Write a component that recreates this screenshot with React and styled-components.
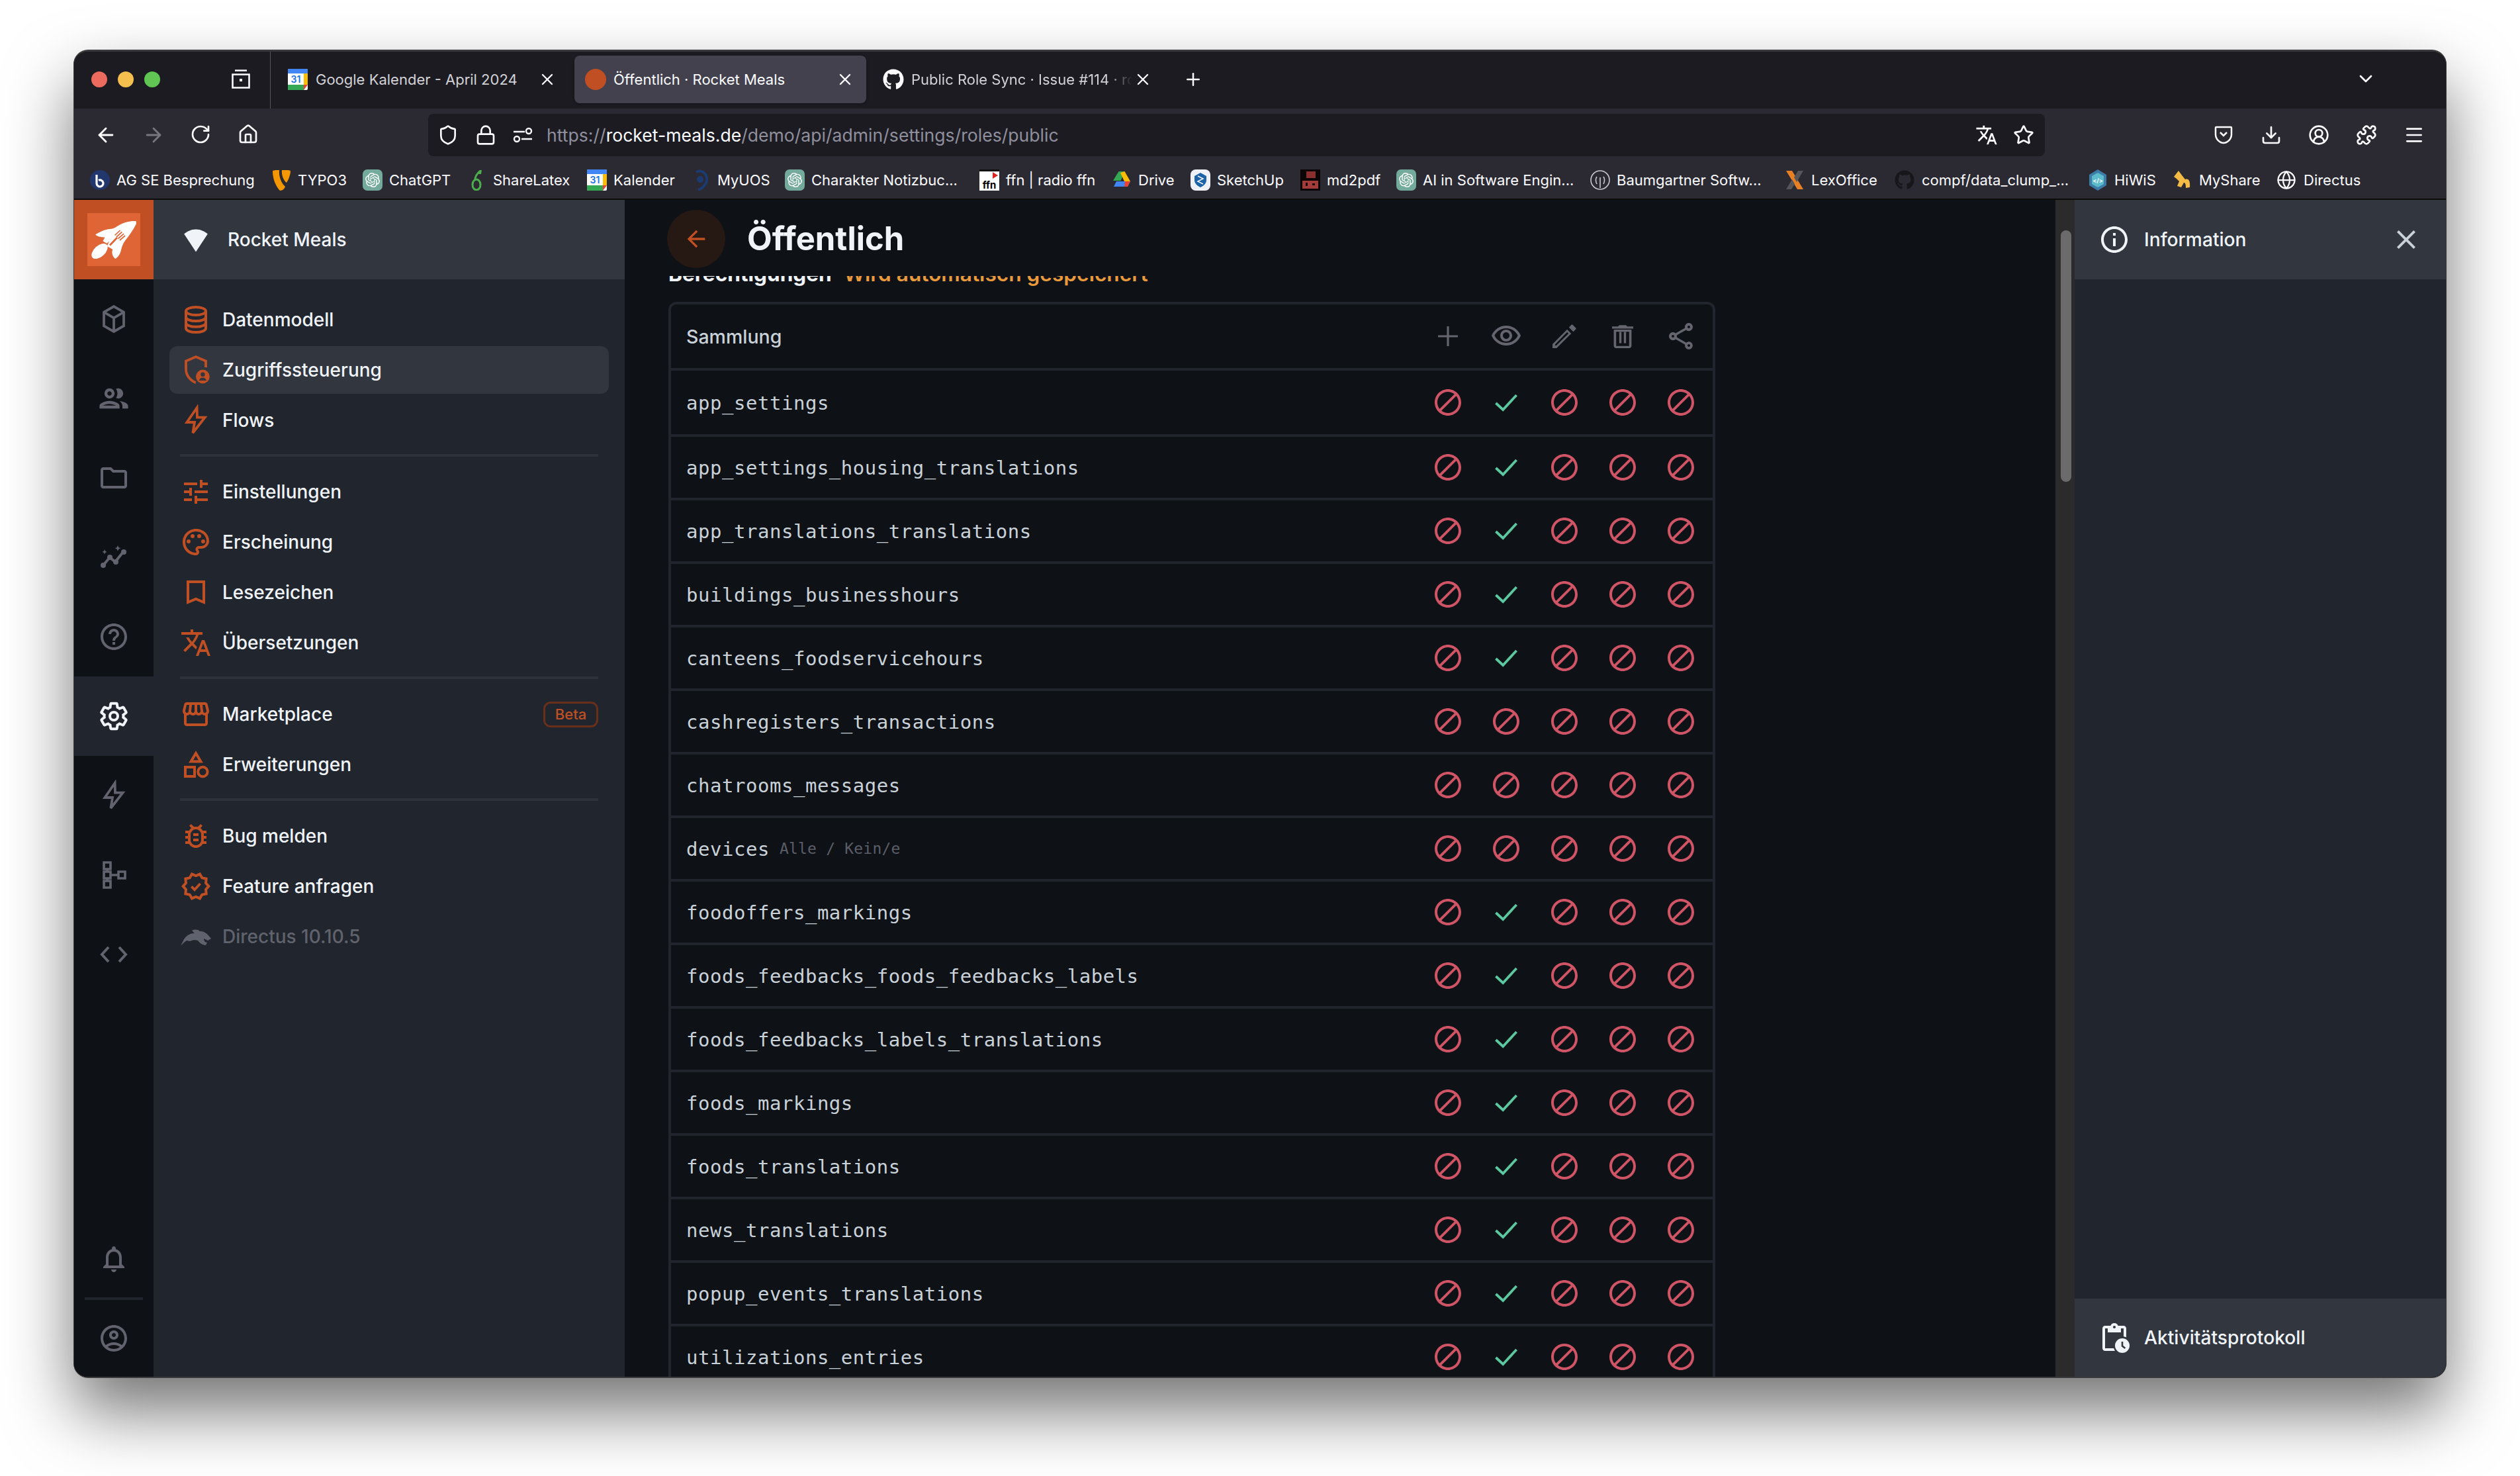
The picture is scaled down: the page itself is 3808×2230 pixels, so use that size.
import React from 'react';
import styled, { createGlobalStyle } from 'styled-components';
import { ArrowLeft, ArrowRight, RotateCw, Home, Shield, Lock, Star, Download, CircleUserRound, Puzzle, Menu, ChevronDown, Plus, X, Globe } from 'lucide-react';
import { FaGithub } from 'react-icons/fa';
import { SiOpenai } from 'react-icons/si';

const ORANGE = '#c05024';
const MODULE = '#62636e';

const Global = createGlobalStyle`
  html, body { margin: 0; padding: 0; background: #fff; }
  * { box-sizing: border-box; }
  body { font-family: Inter, "Liberation Sans", sans-serif; }
`;

const Page = styled.div`
  width: 3808px; height: 2230px; padding: 75px 111px 148px; overflow: hidden; background: #fff;
`;
const Win = styled.div`
  height: 2007px; display: flex; flex-direction: column; border-radius: 22px; overflow: hidden;
  border: solid #3a3a3c; border-width: 3px 1px 2px;
  box-shadow: 0 50px 100px rgba(0,0,0,.55);
  background: #1c1b22;
`;

/* Browser chrome */
const TitleBar = styled.div`height: 86px; flex: none; display: flex; align-items: center; background: #1c1b22; color: #fbfbfe;`;
const Lights = styled.div`display: flex; gap: 16px; margin-left: 26px; margin-bottom: 2px;`;
const Light = styled.span`width: 24px; height: 24px; border-radius: 50%; background: ${p => p.$c};`;
const TabsBtn = styled.div`margin-left: 106px; margin-bottom: 2px; width: 32px; height: 32px; display: flex;`;
const TabSep = styled.div`width: 1px; height: 86px; margin-left: 28px; background: #55545c;`;
const Tabs = styled.div`display: flex; gap: 9px; margin-left: 9px; margin-bottom: 2px; align-items: center;`;
const Tab = styled.div`
  width: 441px; height: 72px; border-radius: 8px; display: flex; align-items: center; padding: 0 16px;
  background: ${p => p.$active ? '#42414d' : 'transparent'};
  box-shadow: ${p => p.$active ? '0 1px 4px rgba(0,0,0,.4)' : 'none'};
`;
const TabIcon = styled.div`width: 32px; height: 32px; flex: none; display: flex; align-items: center; justify-content: center;`;
const TabDot = styled.span`width: 32px; height: 32px; border-radius: 50%; background: ${ORANGE};`;
const TabLabel = styled.div`
  margin-left: 11px; flex: 1; min-width: 0; white-space: nowrap; overflow: hidden; font-size: 22px; font-weight: 400;
  color: ${p => p.$active ? '#fbfbfe' : '#d2d2d6'};
  -webkit-mask-image: ${p => p.$fade ? 'linear-gradient(90deg,#000 88%,transparent 100%)' : 'none'};
`;
const TabClose = styled.div`width: 32px; height: 24px; display: flex; align-items: center; justify-content: center; flex: none; color: #fbfbfe;`;
const NewTab = styled.div`margin-left: 28px; margin-bottom: 2px; width: 32px; display: flex; justify-content: center;`;
const ListTabs = styled.div`margin-left: auto; margin-right: 105px; margin-bottom: 4px; width: 32px; display: flex; justify-content: center;`;

const ToolBar = styled.div`height: 72px; flex: none; padding: 8px 32px 0 28px; display: flex; align-items: center; background: #2b2a33; color: #fbfbfe;`;
const NavBtns = styled.div`display: flex; gap: 31.5px; width: 507px; flex: none;`;
const NavBtn = styled.div`width: 40px; display: flex; justify-content: center; color: ${p => p.$dim ? '#77767e' : '#fbfbfe'};`;
const UrlBar = styled.div`width: 2443px; height: 64px; flex: none; border-radius: 8px; background: #1c1b22; padding: 0 16px 0 14px; display: flex; align-items: center;`;
const UrlIcon = styled.div`width: 32px; height: 32px; display: flex; justify-content: center; align-items: center; margin-right: ${p => p.$mr || 0}px; flex: none;`;
const UrlText = styled.div`flex: 1; font-size: 26.6px; color: #8f8f9d; white-space: nowrap; margin-left: -4px; b { font-weight: 400; color: #fbfbfe; }`;
const Tools = styled.div`display: flex; gap: 40px; margin-left: auto;`;

const Bookmarks = styled.div`height: 64px; flex: none; padding: 8px 0 0 24px; display: flex; align-items: center; background: #2b2a33;`;
const Bookmark = styled.div`flex: none; width: ${p => p.$w}px; display: flex; align-items: center; gap: 10px; font-size: 22px; color: #fbfbfe; white-space: nowrap;`;
const Fav = styled.svg`width: 30px; height: 32px; flex: none; display: block;`;
const BlackLine = styled.div`height: 2px; flex: none; background: #0b0b0c;`;

/* App */
const AppRow = styled.div`flex: 1; min-height: 0; display: flex; background: #0e1116; font-family: Inter, sans-serif;`;
const ModuleBar = styled.div`width: 120px; flex: none; background: #0e1116; display: flex; flex-direction: column;`;
const LogoBox = styled.div`height: 120px; background: ${ORANGE}; display: flex; align-items: center; justify-content: center;`;
const LogoInner = styled.div`width: 80px; height: 80px; background: #e06536;`;
const ModBtn = styled.div`
  height: ${p => p.$h || 120}px; flex: none; display: flex; align-items: center; justify-content: center;
  color: ${p => p.$active ? '#f0f4f9' : MODULE}; background: ${p => p.$active ? '#21262e' : 'transparent'};
`;
const ModSpacer = styled.div`flex: 1;`;
const ModRule = styled.div`height: 4px; margin: 0 16px; background: #21262e; flex: none;`;

const Nav = styled.div`width: 712px; flex: none; background: #21262e; display: flex; flex-direction: column; overflow: hidden;`;
const NavHead = styled.div`height: 120px; flex: none; background: #31363f; display: flex; align-items: center; padding-left: 40px; gap: 24px; color: #f0f4f9; font-size: 28px; font-weight: 500;`;
const NavList = styled.div`padding: 25px 24px 0; display: flex; flex-direction: column; gap: 4px;`;
const NavItem = styled.div`
  height: 72px; flex: none; display: flex; align-items: center; gap: 16px; padding: 0 16px; border-radius: 12px;
  font-size: 28px; font-weight: 500;
  color: ${p => p.$muted ? '#60636d' : '#f0f4f9'}; background: ${p => p.$active ? '#31363f' : 'transparent'};
`;
const NavIcon = styled.div`width: 48px; height: 48px; flex: none; display: flex; align-items: center; justify-content: center; color: ${p => p.$muted ? '#60636d' : ORANGE};`;
const NavRule = styled.div`height: 4px; flex: none; margin: 11px 16px 13px; background: #2d323b;`;
const Beta = styled.span`
  margin-left: auto; height: 39px; width: 83px; border: 3px solid #6a2f1b; border-radius: 11px;
  display: flex; align-items: center; justify-content: center; font-size: 22px; font-weight: 500; color: ${ORANGE};
`;

const Main = styled.div`width: 2162px; flex: none; overflow: hidden; display: flex; flex-direction: column;`;
const Head = styled.div`height: 115px; flex: none; padding: 15px 0 0 64px; display: flex; gap: 33px; align-items: flex-start;`;
const BackBtn = styled.div`width: 88px; height: 88px; border-radius: 50%; background: #261813; color: ${ORANGE}; display: flex; align-items: center; justify-content: center;`;
const Title = styled.h1`margin: 0; height: 88px; line-height: 88px; font-size: 49px; font-weight: 700; color: #f0f4f9;`;
const Scrolled = styled.div`padding-left: 66px; flex: 1; min-height: 0;`;
const ClipLabel = styled.div`height: 15px; overflow: hidden; position: relative; display: flex; align-items: flex-end;`;
const LabelLine = styled.div`flex: none; line-height: 36px; height: 36px; font-size: 31.6px; font-weight: 700; color: #f0f4f9; white-space: nowrap; em { font-style: normal; font-weight: 600; color: #e99a3d; margin-left: 18px; }`;
const Table = styled.div`width: 1582px; margin-top: 24px; border: 4px solid #21262e; border-bottom: 0; border-radius: 12px 12px 0 0;`;
const Row = styled.div`
  height: ${p => p.$h}px; display: flex; align-items: center; padding: 0 24px 0 23px; border-bottom: 4px solid #21262e;
`;
const RowHeadText = styled.div`font-size: 28.5px; font-weight: 500; color: #c9d1d9;`;
const RowName = styled.div`font-family: "DejaVu Sans Mono", monospace; font-size: 29px; letter-spacing: .53px; color: #c9d1d9; white-space: nowrap; padding-top: 2px;`;
const RowNote = styled.span`font-family: "DejaVu Sans Mono", monospace; font-size: 23px; letter-spacing: .2px; color: #5b5e68; margin-left: 15px; white-space: nowrap;`;
const Cells = styled.div`margin-left: auto; display: flex; gap: 40px; color: ${p => p.$c || 'inherit'};`;
const Mi = styled.svg`width: ${p => p.$s || 48}px; height: ${p => p.$s || 48}px; flex: none; display: block; fill: currentColor; color: ${p => p.$c || 'inherit'};`;

const Track = styled.div`width: 29px; flex: none; background: #2b2b2b; padding: 46px 5px 0 8px;`;
const Thumb = styled.div`height: 380px; border-radius: 8px; background: #6b6b6b;`;

const Side = styled.div`flex: 1; min-width: 0; background: #21262e; display: flex; flex-direction: column;`;
const SideBar = styled.div`
  height: ${p => p.$h}px; flex: none; background: #31363f; display: flex; align-items: center; padding: 0 36px; gap: 21px;
  color: #f0f4f9; font-size: 28.2px; font-weight: 500;
`;
const SideFill = styled.div`flex: 1;`;
const SideClose = styled.div`margin-left: auto; color: #c9d1d9; display: flex;`;

const P = ({ d, c, s, rule }) => <Mi viewBox="0 0 24 24" $c={c} $s={s}><path d={d} fillRule={rule} /></Mi>;
const Stroke = ({ children, w = 2, s }) => (
  <Mi viewBox="0 0 24 24" $s={s} style={{ fill: 'none', stroke: 'currentColor', strokeWidth: w }}>{children}</Mi>
);

const ICON = {
  block: 'M12 2C6.48 2 2 6.48 2 12s4.48 10 10 10 10-4.48 10-10S17.52 2 12 2zM4 12c0-4.42 3.58-8 8-8 1.85 0 3.55.63 4.9 1.69L5.69 16.9C4.63 15.55 4 13.85 4 12zm8 8c-1.85 0-3.55-.63-4.9-1.69L18.31 7.1C19.37 8.45 20 10.15 20 12c0 4.42-3.58 8-8 8z',
  add: 'M19.5 12.8h-6.7v6.7h-1.6v-6.7H4.5v-1.6h6.7V4.5h1.6v6.7h6.7z',
  eye: 'M12 6c3.79 0 7.17 2.13 8.82 5.5C19.17 14.87 15.79 17 12 17s-7.17-2.13-8.82-5.5C4.83 8.13 8.21 6 12 6m0-2C7 4 2.73 7.11 1 11.5 2.73 15.89 7 19 12 19s9.27-3.11 11-7.5C21.27 7.11 17 4 12 4zm0 5c1.38 0 2.5 1.12 2.5 2.5S13.38 14 12 14s-2.5-1.12-2.5-2.5S10.62 9 12 9m0-2c-2.48 0-4.5 2.02-4.5 4.5S9.52 16 12 16s4.5-2.02 4.5-4.5S14.48 7 12 7z',
  pen: 'M14.06 8.9l1.05 1.05L5.9 19H5v-.92l9.06-9.18M17.8 3.2c-.2 0-.35.06-.5.2l-1.9 1.9 3.3 3.3 1.9-1.9c.27-.28.27-.72 0-1l-2.3-2.3c-.14-.14-.3-.2-.5-.2zM14.06 6.9L3 17.95V21h3.1L17.15 9.95l-3.1-3.05z',
  trash: 'M5.3 7h13.4v12.2c0 1-.8 1.8-1.8 1.8H7.1c-1 0-1.8-.8-1.8-1.8V7zm1.8 1.6v10.8h9.8V8.6H7.1zM9.4 8.8h1.7v8.4H9.4zm3.5 0h1.7v8.4h-1.7zM4 4.6h4.5l1-1h5l1 1H20v1.7H4z',
  share: 'M18 16.08c-.76 0-1.44.3-1.96.77L8.91 12.7c.05-.23.09-.46.09-.7s-.04-.47-.09-.7l7.05-4.11c.54.5 1.25.81 2.04.81 1.66 0 3-1.34 3-3s-1.34-3-3-3-3 1.34-3 3c0 .24.04.47.09.7L8.04 9.81C7.5 9.31 6.79 9 6 9c-1.66 0-3 1.34-3 3s1.34 3 3 3c.79 0 1.5-.31 2.04-.81l7.12 4.16c-.05.21-.08.43-.08.65 0 1.61 1.31 2.92 2.92 2.92s2.92-1.31 2.92-2.92c0-1.61-1.31-2.92-2.92-2.92zM18 4c.55 0 1 .45 1 1s-.45 1-1 1-1-.45-1-1 .45-1 1-1zM6 13c-.55 0-1-.45-1-1s.45-1 1-1 1 .45 1 1-.45 1-1 1zm12 7.02c-.55 0-1-.45-1-1s.45-1 1-1 1 .45 1 1-.45 1-1 1z',
  tune: 'M3 17v2h6v-2H3zM3 5v2h10V5H3zm10 16v-2h8v-2h-8v-2h-2v6h2zM7 9v2H3v2h4v2h2V9H7zm14 4v-2H11v2h10zm-6-4h2V7h4V5h-4V3h-2v6z',
  palette: 'M12 22C6.49 22 2 17.51 2 12S6.49 2 12 2s10 4.04 10 9c0 3.31-2.69 6-6 6h-1.77c-.28 0-.5.22-.5.5 0 .12.05.23.13.33.41.47.64 1.06.64 1.67 0 1.38-1.12 2.5-2.5 2.5zm0-18c-4.41 0-8 3.59-8 8s3.59 8 8 8c.28 0 .5-.22.5-.5 0-.16-.08-.28-.14-.35-.41-.46-.63-1.05-.63-1.65 0-1.38 1.12-2.5 2.5-2.5H16c2.21 0 4-1.79 4-4 0-3.86-3.59-7-8-7zM6.5 10a1.5 1.5 0 1 0 0 3 1.5 1.5 0 0 0 0-3zm3-4a1.5 1.5 0 1 0 0 3 1.5 1.5 0 0 0 0-3zm5 0a1.5 1.5 0 1 0 0 3 1.5 1.5 0 0 0 0-3zm3 4a1.5 1.5 0 1 0 0 3 1.5 1.5 0 0 0 0-3z',
  bookmark: 'M5 3h14v18l-7-3-7 3V3zm2 2v13l5-2.18L17 18V5H7z',
  translate: 'M12.87 15.07l-2.54-2.51.03-.03c1.74-1.94 2.98-4.17 3.71-6.53H17V4h-7V2H8v2H1v1.99h11.17C11.5 7.92 10.44 9.75 9 11.35 8.07 10.32 7.3 9.19 6.69 8h-2c.73 1.63 1.73 3.17 2.98 4.56l-5.09 5.02L4 19l5-5 3.11 3.11.76-2.04zM18.5 10h-2L12 22h2l1.12-3h4.75L21 22h2l-4.5-12zm-2.62 7l1.62-4.33L19.12 17h-3.24z',
  store: 'M21.9 8.89l-1.05-4.37c-.22-.9-1-1.52-1.91-1.52H5.05c-.9 0-1.69.63-1.9 1.52L2.1 8.89c-.24 1.02-.02 2.06.62 2.88.08.11.19.19.28.29V19c0 1.1.9 2 2 2h14c1.1 0 2-.9 2-2v-6.94c.09-.09.2-.18.28-.28.64-.82.87-1.87.62-2.89zm-2.99-3.9l1.05 4.37c.1.42.01.84-.25 1.17-.14.18-.44.47-.94.47-.61 0-1.14-.49-1.21-1.14L16.98 5l1.93-.01zM13 5h1.96l.54 4.52c.05.39-.07.78-.33 1.07-.22.26-.54.41-.95.41-.67 0-1.22-.59-1.22-1.31V5zM8.49 9.52L9.04 5H11v4.69c0 .72-.55 1.31-1.29 1.31-.34 0-.65-.15-.89-.41-.25-.29-.37-.68-.33-1.07zm-4.45-.16L5.05 5h1.97l-.58 4.86c-.08.65-.6 1.14-1.21 1.14-.49 0-.8-.29-.93-.47-.27-.32-.36-.75-.26-1.17zM5 19v-6.03c.08.01.15.03.23.03.87 0 1.66-.36 2.24-.95.6.6 1.4.95 2.31.95.87 0 1.65-.36 2.23-.93.59.57 1.39.93 2.29.93.84 0 1.64-.35 2.24-.95.58.59 1.37.95 2.24.95.08 0 .15-.02.23-.03V19H5z',
  bug: 'M20 8h-2.81c-.45-.78-1.07-1.45-1.82-1.96L17 4.41 15.59 3l-2.17 2.17C12.96 5.06 12.49 5 12 5c-.49 0-.96.06-1.41.17L8.41 3 7 4.41l1.62 1.63C7.88 6.55 7.26 7.22 6.81 8H4v2h2.09c-.05.33-.09.66-.09 1v1H4v2h2v1c0 .34.04.67.09 1H4v2h2.81c1.04 1.79 2.97 3 5.19 3s4.15-1.21 5.19-3H20v-2h-2.09c.05-.33.09-.66.09-1v-1h2v-2h-2v-1c0-.34-.04-.67-.09-1H20V8zm-4 4v3c0 .22-.03.47-.07.7l-.1.65-.37.65c-.72 1.24-2.04 2-3.46 2s-2.74-.77-3.46-2l-.37-.64-.1-.65C8.03 15.48 8 15.23 8 15v-4c0-.23.03-.48.07-.7l.1-.65.37-.65c.3-.52.72-.97 1.21-1.31l.57-.39.74-.18c.31-.08.63-.12.94-.12.32 0 .63.04.95.12l.68.16.61.42c.5.34.91.78 1.21 1.31l.38.65.1.65c.04.22.07.47.07.69v1zm-6 2h4v2h-4zm0-4h4v2h-4z',
  verified: 'M23 12l-2.44-2.78.34-3.68-3.61-.82-1.89-3.18L12 3 8.6 1.54 6.71 4.72l-3.61.81.34 3.68L1 12l2.44 2.78-.34 3.69 3.61.82 1.89 3.18L12 21l3.4 1.46 1.89-3.18 3.61-.82-.34-3.68L23 12zm-4.51 2.11l.26 2.79-2.74.62-1.43 2.41L12 18.82l-2.58 1.11-1.43-2.41-2.74-.62.26-2.8L3.66 12l1.85-2.12-.26-2.78 2.74-.61 1.43-2.41L12 5.18l2.58-1.11 1.43 2.41 2.74.62-.26 2.79L20.34 12l-1.85 2.11z',
  folder: 'M9.17 6l2 2H20v10H4V6h5.17M10 4H4c-1.1 0-2 .9-2 2l-.01 12c0 1.1.9 2 2 2H20c1.1 0 2-.9 2-2V8c0-1.1-.9-2-2-2h-8l-2-2z',
  help: 'M11 18h2v-2h-2v2zm1-16C6.48 2 2 6.48 2 12s4.48 10 10 10 10-4.48 10-10S17.52 2 12 2zm0 18c-4.41 0-8-3.59-8-8s3.59-8 8-8 8 3.59 8 8-3.59 8-8 8zm0-14c-2.21 0-4 1.79-4 4h2c0-1.1.9-2 2-2s2 .9 2 2c0 2-3 1.75-3 5h2c0-2.25 3-2.5 3-5 0-2.21-1.79-4-4-4z',
  info: 'M11 7h2v2h-2zm0 4h2v6h-2zm1-9C6.48 2 2 6.48 2 12s4.48 10 10 10 10-4.48 10-10S17.52 2 12 2zm0 18c-4.41 0-8-3.59-8-8s3.59-8 8-8 8 3.59 8 8-3.59 8-8 8z',
  close: 'M19 6.41L17.59 5 12 10.59 6.41 5 5 6.41 10.59 12 5 17.59 6.41 19 12 13.41 17.59 19 19 17.59 13.41 12z',
  back: 'M20 11H7.83l5.59-5.59L12 4l-8 8 8 8 1.41-1.41L7.83 13H20v-2z',
  bell: 'M12 22c1.1 0 2-.9 2-2h-4c0 1.1.9 2 2 2zm6-6v-5c0-3.07-1.63-5.64-4.5-6.32V4c0-.83-.67-1.5-1.5-1.5s-1.5.67-1.5 1.5v.68C7.64 5.36 6 7.92 6 11v5l-2 2v1h16v-1l-2-2zm-2 1H8v-6c0-2.48 1.51-4.5 4-4.5s4 2.02 4 4.5v6z',
  account: 'M12 2C6.48 2 2 6.48 2 12s4.48 10 10 10 10-4.48 10-10S17.52 2 12 2zM7.35 18.5C8.66 17.56 10.26 17 12 17s3.34.56 4.65 1.5C15.34 19.44 13.74 20 12 20s-3.34-.56-4.65-1.5zm10.79-1.38C16.45 15.8 14.32 15 12 15s-4.45.8-6.14 2.12C4.7 15.73 4 13.95 4 12c0-4.42 3.58-8 8-8s8 3.58 8 8c0 1.95-.7 3.73-1.86 5.12zM12 6c-1.93 0-3.5 1.57-3.5 3.5S10.07 13 12 13s3.5-1.57 3.5-3.5S13.93 6 12 6zm0 5c-.83 0-1.5-.67-1.5-1.5S11.17 8 12 8s1.5.67 1.5 1.5S12.83 11 12 11z',
  group: 'M9 13.75c-2.34 0-7 1.17-7 3.5V19h14v-1.75c0-2.33-4.66-3.5-7-3.5zM4.34 17c.84-.58 2.87-1.25 4.66-1.25s3.82.67 4.66 1.25H4.34zM9 12c1.93 0 3.5-1.57 3.5-3.5S10.93 5 9 5 5.5 6.57 5.5 8.5 7.07 12 9 12zm0-5c.83 0 1.5.67 1.5 1.5S9.83 10 9 10s-1.5-.67-1.5-1.5S8.17 7 9 7zm7.04 6.81c1.16.84 1.96 1.96 1.96 3.44V19h4v-1.75c0-2.02-3.5-3.17-5.96-3.44zM15 12c1.93 0 3.5-1.57 3.5-3.5S16.93 5 15 5c-.54 0-1.04.13-1.5.35.63.89 1 1.98 1 3.15s-.37 2.26-1 3.15c.46.22.96.35 1.5.35z',
  diamond: 'M12 4.2c-3.6 0-7 1.7-8.9 3.6L12 21.2l8.9-13.4C19 5.9 15.6 4.2 12 4.2z',
  gear: 'M19.14 12.94c.04-.3.06-.61.06-.94 0-.32-.02-.64-.07-.94l2.03-1.58c.18-.14.23-.41.12-.61l-1.92-3.32c-.12-.22-.37-.29-.59-.22l-2.39.96c-.5-.38-1.03-.7-1.62-.94l-.36-2.54c-.04-.24-.24-.41-.48-.41h-3.84c-.24 0-.43.17-.47.41l-.36 2.54c-.59.24-1.13.57-1.62.94l-2.39-.96c-.22-.08-.47 0-.59.22L2.74 8.87c-.12.21-.08.47.12.61l2.03 1.58c-.05.3-.09.63-.09.94s.02.64.07.94l-2.03 1.58c-.18.14-.23.41-.12.61l1.92 3.32c.12.22.37.29.59.22l2.39-.96c.5.38 1.03.7 1.62.94l.36 2.54c.05.24.24.41.48.41h3.84c.24 0 .44-.17.47-.41l.36-2.54c.59-.24 1.13-.56 1.62-.94l2.39.96c.22.08.47 0 .59-.22l1.92-3.32c.12-.22.07-.47-.12-.61l-2.01-1.58z',
};

const Block = () => <P d={ICON.block} c="#cf5466" />;
const Check = () => (
  <Mi viewBox="0 0 24 24" style={{ fill: 'none', stroke: '#5bc8a0', strokeWidth: 1.9 }}><path d="M4.2 12.5l5.4 5 10.2-11" /></Mi>
);

const RocketLogo = () => (
  <svg width="80" height="80" viewBox="0 0 80 80">
    <path fill="#fff" d="M73.8 12.2C67 11.2 55 13.5 46.5 19c-3.8 2.5-7 4.6-10 4.7-6.5.2-14.5 2.5-24.2 8.6 1.3 2.7 8 4.2 14.3 4.3l-3.2 5.7 6 3.4 3.6-3.2-3.2 7.6 8.4 4.6c-1.6 4.4-.8 10.3 4.1 14.2 4-2 7.4-7 8.6-12.6.9-5 2.7-9.8 6.1-14.6 6.7-8.6 12.7-16.6 16.8-25.5z" />
    <ellipse cx="18.500" cy="57.500" rx="14.500" ry="8.400" fill="#fff" transform="rotate(-42 18.500 57.500)" />
    <g stroke="#e06536" strokeWidth="1.700" fill="none">
      <path d="M41.500 33.500l8-7.500M44 36l8.400-7.600M46.500 38.500l8.600-7.400M49 41l8-7" />
      <path d="M34 48.500L45 37" strokeWidth="2.800" />
    </g>
  </svg>
);

const Cal = () => (
  <Fav viewBox="0 0 30 32">
    <rect width="30" height="32" rx="2" fill="#fff" />
    <path d="M0 7V2a2 2 0 0 1 2-2h26a2 2 0 0 1 2 2v5z" fill="#4285f4" />
    <path d="M0 24h24v8H2a2 2 0 0 1-2-2z" fill="#34a853" />
    <path d="M24 7h6v17h-6z" fill="#fbbc04" />
    <path d="M24 24h6l-6 8z" fill="#ea4335" />
    <text x="12" y="21" fontSize="14" textAnchor="middle" fill="#1a73e8" fontFamily="Inter" fontWeight="600">31</text>
  </Fav>
);
const Oai = () => (
  <Fav viewBox="0 0 30 32">
    <rect width="30" height="32" rx="7" fill="#74aa9c" />
    <foreignObject x="4" y="5" width="22" height="22"><SiOpenai size={22} color="#fff" /></foreignObject>
  </Fav>
);
const favs = {
  cal: <Cal />, oai: <Oai />,
  bbb: <Fav viewBox="0 0 30 32"><circle cx="15" cy="16" r="15" fill="#23376f" /><path d="M10 8v13a5 5 0 1 0 3-4.600" fill="none" stroke="#fff" strokeWidth="3.200" /></Fav>,
  typo: <Fav viewBox="0 0 30 32"><path d="M2 3c0 11 5 23 11 29 4 0 7-3 8-6C15 21 11 10 12 1 7 1 2 1 2 3zM16 1c-1 8 3 16 7 19 3-4 6-13 6-17 0-2-2-2-13-2z" fill="#f49700" /></Fav>,
  sl: <Fav viewBox="0 0 30 32"><path d="M21 2c-4 2-9 10-8 15" fill="none" stroke="#4cae4c" strokeWidth="3" /><ellipse cx="15" cy="23" rx="6" ry="8" fill="none" stroke="#4cae4c" strokeWidth="3" /><path d="M20 1l3 0-1 6-4 0z" fill="#4cae4c" /></Fav>,
  uos: <Fav viewBox="0 0 30 32"><path d="M8 4c12-6 20 8 14 18-3 5-8 8-11 9" fill="none" stroke="#1c3b72" strokeWidth="4" /><circle cx="14" cy="15" r="5" fill="#1c3b72" /></Fav>,
  ffn: <Fav viewBox="0 0 30 32"><rect width="30" height="32" fill="#fff" /><rect width="30" height="3" fill="#111" /><path d="M20 4l8 5-8 5z" fill="#d22" /><text x="15" y="29" fontSize="15" fontWeight="700" fontFamily="Inter" textAnchor="middle" fill="#000">ffn</text></Fav>,
  drive: <Fav viewBox="0 0 30 32"><path d="M10.500 3h9l-6 14H2z" fill="#34a853" /><path d="M19.500 3L28 18h-9L13 5z" fill="#fbbc04" /><path d="M7 18h21l-4 8H3z" fill="#4285f4" /><path d="M20 18h8l-4 8h-5z" fill="#ea4335" /></Fav>,
  su: <Fav viewBox="0 0 30 32"><rect width="30" height="32" rx="8" fill="#eef2f7" /><path d="M15 5l9 5v6c0 6-5 9-9 11-4-2-9-5-9-11v-6z" fill="#1c63a8" /><path d="M11 10l8 4-8 4 8 4" fill="none" stroke="#eef2f7" strokeWidth="1.600" /></Fav>,
  md: <Fav viewBox="0 0 30 32"><rect width="30" height="32" fill="#0c0505" /><rect x="9" y="3" width="14" height="10" fill="#8b2f2f" /><rect x="3" y="17" width="24" height="12" fill="#a33b3b" /><rect x="8" y="20" width="3" height="5" fill="#1a0808" /><rect x="18" y="21" width="4" height="3" fill="#1a0808" /></Fav>,
  baum: <Fav viewBox="0 0 30 32"><circle cx="15" cy="16" r="14" fill="none" stroke="#c8c8cc" strokeWidth="1.600" /><path d="M15 28V12M10 22c-2-4-2-8 0-11M20 22c2-4 2-8 0-11" fill="none" stroke="#c8c8cc" strokeWidth="1.600" /></Fav>,
  lex: <Fav viewBox="0 0 30 32"><path d="M2 2h9l17 28h-9z" fill="#e77f25" /><path d="M28 2h-8l-6 10 4 7zM2 30h8l5-8-4-7z" fill="#55555a" /></Fav>,
  git: <TabIcon><FaGithub size={30} color="#17171b" /></TabIcon>,
  hiwis: <Fav viewBox="0 0 30 32"><path d="M15 0l13 8v16l-13 8-13-8V8z" fill="#3e7ca8" /><path d="M15 5l9 5v12l-9 5-9-5V10z" fill="#5cbccc" /><text x="15" y="20" textAnchor="middle" fontSize="9" fontWeight="700" fontFamily="Inter" fill="#fff">&lt;/&gt;</text></Fav>,
  share: <Fav viewBox="0 0 30 32"><path d="M2 11l7-9 6 8 4 5c5-2 8 2 7 12l-6 1c0-6-1-8-3-8l-4 7-6-2 3-7-4-4z" fill="#f3bb45" /></Fav>,
  globe: <TabIcon><Globe size={30} strokeWidth={1.800} color="#fbfbfe" /></TabIcon>,
};

const centers = [151, 425, 563, 720, 902, 1059, 1201, 1495, 1695, 1814, 1980, 2125, 2418, 2712, 2877, 3170, 3298, 3454, 3604];
const bookmarks = [
  ['bbb', 'AG SE Besprechung'], ['typo', 'TYPO3'], ['oai', 'ChatGPT'], ['sl', 'ShareLatex'], ['cal', 'Kalender'], ['uos', 'MyUOS'],
  ['oai', 'Charakter Notizbuc...'], ['ffn', 'ffn | radio ffn'], ['drive', 'Drive'], ['su', 'SketchUp'], ['md', 'md2pdf'], ['oai', 'AI in Software Engin...'],
  ['baum', 'Baumgartner Softw...'], ['lex', 'LexOffice'], ['git', 'compf/data_clump_...'], ['hiwis', 'HiWiS'], ['share', 'MyShare'], ['globe', 'Directus'],
];

const rows = [
  ['app_settings', 1], ['app_settings_housing_translations', 1], ['app_translations_translations', 1], ['buildings_businesshours', 1],
  ['canteens_foodservicehours', 1], ['cashregisters_transactions', 0], ['chatrooms_messages', 0], ['devices', 0, 'Alle / Kein/e'],
  ['foodoffers_markings', 1], ['foods_feedbacks_foods_feedbacks_labels', 1], ['foods_feedbacks_labels_translations', 1], ['foods_markings', 1],
  ['foods_translations', 1], ['news_translations', 1], ['popup_events_translations', 1], ['utilizations_entries', 1],
];

const CubeIcon = () => <Stroke w={1.9}><path d="M12 2.500l7.500 4.300v10.400L12 21.500l-7.500-4.300V6.800zM4.500 6.800L12 11.200l7.500-4.400M12 11.200v10.300" /></Stroke>;
const InsightsIcon = () => (
  <Mi viewBox="0 0 24 24">
    <path d="M4 18l5-6 4 3.500L19 8" fill="none" stroke="currentColor" strokeWidth="2" />
    <circle cx="4" cy="18" r="2" /><circle cx="9" cy="12" r="2" /><circle cx="13.500" cy="15.500" r="2" /><circle cx="19.500" cy="8" r="2" />
    <path d="M15 3l.7 1.600L17.300 5l-1.600.7L15 7.300l-.7-1.600L12.700 5l1.600-.4zM5 6l.5 1.200L6.700 8l-1.200.5L5 9.700l-.5-1.200L3.300 8l1.200-.8z" />
  </Mi>
);
const BoltStroke = () => <Stroke w={1.9}><path d="M12.800 2.500L5.200 13.500H11L9.700 21.500 18.800 9.800H13z" /></Stroke>;
const TreeIcon = () => (
  <Stroke w={1.8}><path d="M4.500 2.500h5v5h-5zM4.500 9.500h5v5h-5zM4.500 16.500h5v5h-5zM15.500 9.500h5v5h-5zM7 7.500v2M7 14.500v2M9.500 12h6" /></Stroke>
);
const CodeIcon = () => <Stroke w={2}><path d="M8 6.500L3 12l5 5.500M16 6.500l5 5.500-5 5.500" /></Stroke>;
const GearIcon = () => (
  <Mi viewBox="0 0 24 24" style={{ fill: 'none', stroke: 'currentColor', strokeWidth: 2 }}>
    <path d={ICON.gear} /><circle cx="12" cy="12" r="3" />
  </Mi>
);

const DbIcon = () => <Stroke w={2}><ellipse cx="12" cy="5.500" rx="7.500" ry="3" /><path d="M4.500 5.500v13c0 1.700 3.400 3 7.500 3s7.500-1.300 7.500-3v-13M4.500 10c0 1.700 3.400 3 7.500 3s7.500-1.300 7.500-3M4.500 14.400c0 1.700 3.400 3 7.500 3s7.500-1.300 7.500-3" /></Stroke>;
const AdminIcon = () => (
  <Mi viewBox="0 0 24 24">
    <path d="M19.500 10V5.200L12 2 4.500 5.200v6c0 4.600 3 8.700 7.400 10.400M19.500 10" fill="none" stroke="currentColor" strokeWidth="1.900" />
    <circle cx="17.200" cy="17" r="5.200" />
    <circle cx="17.200" cy="15.400" r="1.600" fill="#31363f" />
    <path d="M14.400 20c.5-1.600 1.600-2.300 2.800-2.300s2.300.7 2.800 2.300z" fill="#31363f" />
  </Mi>
);
const ShapesIcon = () => (
  <Stroke w={2}><path d="M12 3.500l3.700 6.200H8.300zM4 14h7v7H4z" /><circle cx="17.200" cy="17.500" r="3.600" /></Stroke>
);
const VerifiedIcon = () => (
  <Mi viewBox="0 0 24 24"><path d={ICON.verified} /><path d="M8.700 12.200l2.300 2.400 4.300-4.600" fill="none" stroke="currentColor" strokeWidth="1.900" /></Mi>
);
const RabbitIcon = () => (
  <Mi viewBox="0 0 24 24"><path d="M.5 19L3 14c2-3 5-4.500 8-4.500L9 7.500c2-1 4.500-1 6 .5 3 0 5 1 8.500 5.500L21 15l-3-1.500c0 1.500 1 3 2.500 3l-1 2c-2.500 0-4.500-1.500-6-3.500-2-.5-4-.5-6 .5L5 15l-2 1.500z" /></Mi>
);

const nav = [
  [[<DbIcon />, 'Datenmodell'], [<AdminIcon />, 'Zugriffssteuerung', true], [<BoltStroke />, 'Flows']],
  [[<P d={ICON.tune} />, 'Einstellungen'], [<P d={ICON.palette} />, 'Erscheinung'], [<P d={ICON.bookmark} rule="evenodd" />, 'Lesezeichen'], [<P d={ICON.translate} />, 'Übersetzungen']],
  [[<P d={ICON.store} />, 'Marketplace', false, 'Beta'], [<ShapesIcon />, 'Erweiterungen']],
  [[<P d={ICON.bug} />, 'Bug melden'], [<VerifiedIcon />, 'Feature anfragen']],
];

const ClipIcon = () => (
  <Mi viewBox="0 0 24 24">
    <path d="M19 3h-4.200C14.400 1.800 13.300 1 12 1s-2.400.8-2.800 2H5c-1.100 0-2 .9-2 2v15c0 1.100.9 2 2 2h7.500c-.4-.6-.7-1.300-.9-2H5V5h2v3h10V5h2v6.100c.7.100 1.400.3 2 .6V5c0-1.100-.9-2-2-2zm-7 2c-.6 0-1-.4-1-1s.4-1 1-1 1 .4 1 1-.4 1-1 1z" />
    <circle cx="18" cy="18" r="5.500" /><path d="M18 15v3.300l2.200 1.700" fill="none" stroke="#31363f" strokeWidth="1.300" />
  </Mi>
);
const PocketIcon = () => (
  <svg width="32" height="32" viewBox="0 0 32 32" fill="none" stroke="currentColor" strokeWidth="2.500">
    <path d="M5 4h22a1 1 0 0 1 1 1v10c0 7-6 13-12 13S4 22 4 15V5a1 1 0 0 1 1-1z" /><path d="M11 12l5 5 5-5" />
  </svg>
);
const TabsIcon = () => (
  <svg width="32" height="32" viewBox="0 0 32 32" fill="none" stroke="currentColor" strokeWidth="2.600">
    <path d="M7 2.500h18M3.500 8.500h25v20h-25z" /><path d="M14 17h4" strokeWidth="4" />
  </svg>
);
const UrlSettings = () => (
  <svg width="32" height="32" viewBox="0 0 32 32" fill="none" stroke="currentColor" strokeWidth="2.400">
    <path d="M2 11h17M14 22h16" /><circle cx="25" cy="10" r="4" /><circle cx="7" cy="22" r="4" />
  </svg>
);

export default function App() {
  return (
    <Page>
      <Global />
      <Win>
        <TitleBar>
          <Lights><Light $c="#ed6a5e" /><Light $c="#f4bf4f" /><Light $c="#61c554" /></Lights>
          <TabsBtn><TabsIcon /></TabsBtn>
          <TabSep />
          <Tabs>
            <Tab><TabIcon><Cal /></TabIcon><TabLabel>Google Kalender - April 2024</TabLabel><TabClose><X size={28} strokeWidth={2} /></TabClose></Tab>
            <Tab $active><TabIcon><TabDot /></TabIcon><TabLabel $active>Öffentlich · Rocket Meals</TabLabel><TabClose><X size={28} strokeWidth={2} /></TabClose></Tab>
            <Tab><TabIcon><FaGithub size={32} color="#fbfbfe" /></TabIcon><TabLabel $fade>Public Role Sync · Issue #114 · rocket</TabLabel><TabClose><X size={28} strokeWidth={2} /></TabClose></Tab>
          </Tabs>
          <NewTab><Plus size={30} strokeWidth={2} /></NewTab>
          <ListTabs><ChevronDown size={34} strokeWidth={2} /></ListTabs>
        </TitleBar>
        <ToolBar>
          <NavBtns>
            <NavBtn><ArrowLeft size={34} strokeWidth={2} /></NavBtn>
            <NavBtn $dim><ArrowRight size={34} strokeWidth={2} /></NavBtn>
            <NavBtn><RotateCw size={32} strokeWidth={2} /></NavBtn>
            <NavBtn><Home size={32} strokeWidth={2} /></NavBtn>
          </NavBtns>
          <UrlBar>
            <UrlIcon $mr={25}><Shield size={32} strokeWidth={2} /></UrlIcon>
            <UrlIcon $mr={24}><Lock size={32} strokeWidth={2} /></UrlIcon>
            <UrlIcon $mr={24}><UrlSettings /></UrlIcon>
            <UrlText>https://<b>rocket-meals.de</b>/demo/api/admin/settings/roles/public</UrlText>
            <UrlIcon $mr={24}><P d={ICON.translate} s={34} c="#fbfbfe" /></UrlIcon>
            <UrlIcon><Star size={32} strokeWidth={2} /></UrlIcon>
          </UrlBar>
          <Tools>
            <UrlIcon><PocketIcon /></UrlIcon>
            <UrlIcon><Download size={32} strokeWidth={2} /></UrlIcon>
            <UrlIcon><CircleUserRound size={32} strokeWidth={2} /></UrlIcon>
            <UrlIcon><Puzzle size={32} strokeWidth={2} /></UrlIcon>
            <UrlIcon><Menu size={32} strokeWidth={2} /></UrlIcon>
          </Tools>
        </ToolBar>
        <Bookmarks>
          {bookmarks.map(([f, t], i) => (
            <Bookmark key={t} $w={centers[i + 1] - centers[i]}>{favs[f]}{t}</Bookmark>
          ))}
        </Bookmarks>
        <BlackLine />
        <AppRow>
          <ModuleBar>
            <LogoBox><LogoInner><RocketLogo /></LogoInner></LogoBox>
            <ModBtn><CubeIcon /></ModBtn>
            <ModBtn><P d={ICON.group} s={52} /></ModBtn>
            <ModBtn><P d={ICON.folder} /></ModBtn>
            <ModBtn><InsightsIcon /></ModBtn>
            <ModBtn><P d={ICON.help} /></ModBtn>
            <ModBtn $active><GearIcon /></ModBtn>
            <ModBtn><BoltStroke /></ModBtn>
            <ModBtn><TreeIcon /></ModBtn>
            <ModBtn><CodeIcon /></ModBtn>
            <ModSpacer />
            <ModBtn $h={116}><P d={ICON.bell} /></ModBtn>
            <ModRule />
            <ModBtn $h={116}><P d={ICON.account} /></ModBtn>
          </ModuleBar>
          <Nav>
            <NavHead><P d={ICON.diamond} s={48} />Rocket Meals</NavHead>
            <NavList>
              {nav.map((group, g) => (
                <React.Fragment key={g}>
                  {g > 0 && <NavRule />}
                  {group.map(([ic, label, active, badge]) => (
                    <NavItem key={label} $active={active}>
                      <NavIcon>{ic}</NavIcon>{label}{badge && <Beta>{badge}</Beta>}
                    </NavItem>
                  ))}
                </React.Fragment>
              ))}
              <NavItem $muted><NavIcon $muted><RabbitIcon /></NavIcon>Directus 10.10.5</NavItem>
            </NavList>
          </Nav>
          <Main>
            <Head>
              <BackBtn><P d={ICON.back} s={40} /></BackBtn>
              <Title>Öffentlich</Title>
            </Head>
            <Scrolled>
              <ClipLabel><LabelLine>Berechtigungen<em>Wird automatisch gespeichert</em></LabelLine></ClipLabel>
              <Table>
                <Row $h={100}>
                  <RowHeadText>Sammlung</RowHeadText>
                  <Cells $c="#64656f">
                    <P d={ICON.add} /><P d={ICON.eye} /><P d={ICON.pen} /><P d={ICON.trash} /><P d={ICON.share} />
                  </Cells>
                </Row>
                {rows.map(([name, read, note], i) => (
                  <Row key={name} $h={i === 0 ? 100 : 96}>
                    <RowName>{name}</RowName>
                    {note && <RowNote>{note}</RowNote>}
                    <Cells>
                      <Block />{read ? <Check /> : <Block />}<Block /><Block /><Block />
                    </Cells>
                  </Row>
                ))}
              </Table>
            </Scrolled>
          </Main>
          <Track><Thumb /></Track>
          <Side>
            <SideBar $h={120}><P d={ICON.info} />Information<SideClose><P d={ICON.close} /></SideClose></SideBar>
            <SideFill />
            <SideBar $h={118}><ClipIcon />Aktivitätsprotokoll</SideBar>
          </Side>
        </AppRow>
      </Win>
    </Page>
  );
}
